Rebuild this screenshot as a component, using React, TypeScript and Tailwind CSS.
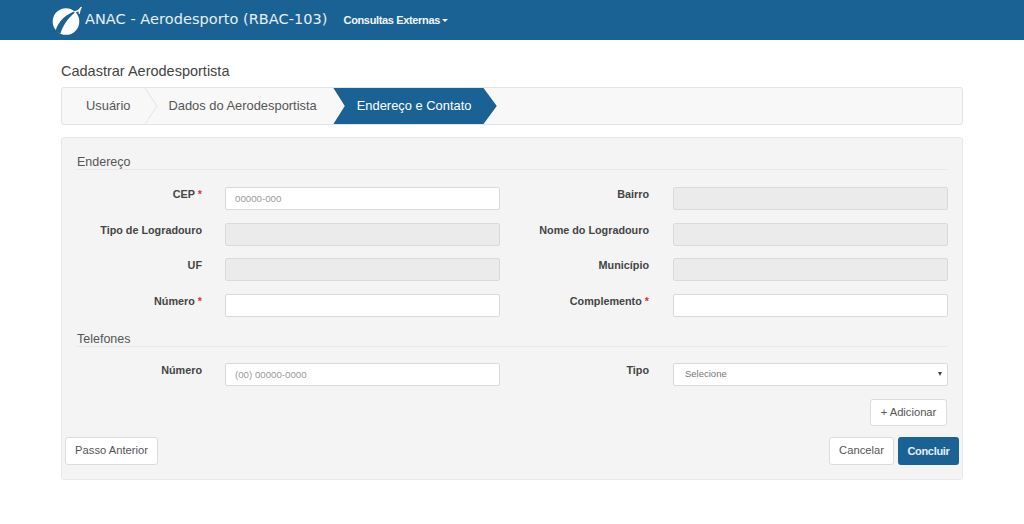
const sans = "font-['Liberation_Sans',Arial,sans-serif]";

function Logo() {
  return (
    <svg width="32" height="30" viewBox="0 0 32 30" className="shrink-0">
      <circle cx="14" cy="16.500" r="13.300" fill="#fff" />
      <path d="M3.500 26C6 16.500 14 8.500 25.500 5.500 18 11 11.500 18.500 8.500 28.500c-2-.5-3.700-1.300-5-2.500z" fill="#1b6294" />
      <path d="M20.500 7l5.500-2 2.700-3c.5-.5 1.300-.3 1.100.5L28.500 5.500l-.8 3.500-.9-.1-.3-2.700-2.900 1.300-.1 1-.9-.2-.2-1.200z" fill="#fff" />
    </svg>
  );
}

function Label({ text, req, right }: { text: string; req?: boolean; right?: boolean }) {
  return (
    <div className={`flex justify-end text-[10.800px] leading-[14px] font-bold text-[#444] ${right ? "pr-px" : ""}`}>
      <span>
        {text}
        {req && <span className="text-[#d9363e]"> *</span>}
      </span>
    </div>
  );
}

function Field({ ph, disabled }: { ph?: string; disabled?: boolean }) {
  return (
    <div
      className={`h-[23px] w-[275px] rounded-[2px] border border-[#dadada] px-[9px] text-[9.700px] leading-[21px] text-[#9a9a9a] ${
        disabled ? "bg-[#ebebeb]" : "bg-white"
      }`}
    >
      {ph}
    </div>
  );
}

function Row({ la, fa, lb, fb }: { la: React.ReactNode; fa: React.ReactNode; lb: React.ReactNode; fb: React.ReactNode }) {
  return (
    <div className="grid grid-cols-[125px_275px_127px_275px] items-start gap-x-[23px]">
      {la}
      {fa}
      {lb}
      {fb}
    </div>
  );
}

function Button({ children, className = "" }: { children: React.ReactNode; className?: string }) {
  return (
    <div className={`flex items-center justify-center rounded-[3px] border border-[#dcdcdc] bg-white text-[11.200px] text-[#555] ${className}`}>
      {children}
    </div>
  );
}

function Section({ title }: { title: string }) {
  return <div className="border-b border-[#e9e9e9] text-[12.500px] leading-[14px] text-[#555]">{title}</div>;
}

export default function App() {
  return (
    <div className={`h-[524px] w-[1024px] overflow-hidden bg-white ${sans}`}>
      <header className="flex h-10 items-center bg-[#1b6294] pl-[52px] text-white">
        <Logo />
        <span className="ml-[1px] font-['DejaVu_Sans',sans-serif] text-[14.500px] font-normal tracking-[0.05px] text-[#e6eff5]">
          ANAC - Aerodesporto (RBAC-103)
        </span>
        <span className="ml-[16px] flex items-center text-[11px] font-bold tracking-[-0.35px] text-[#f2f6f9]">
          Consultas Externas
          <span className="ml-[2px] mt-px h-0 w-0 border-x-[3px] border-t-[3px] border-x-transparent border-t-white" />
        </span>
      </header>

      <main className="mx-[61px] w-[902px]">
        <h1 className="mt-[23px] text-[14.500px] leading-[16px] font-normal text-[#444]">Cadastrar Aerodesportista</h1>

        <nav className="mt-[8px] flex h-[38px] items-center overflow-hidden rounded-[3px] border border-[#e3e3e3] bg-[#f8f8f8] text-[12.900px] text-[#555]">
          <span className="ml-[24px]">Usuário</span>
          <svg width="14" height="36" viewBox="0 0 14 36" className="ml-[15px] shrink-0">
            <path d="M0 0l12 18L0 36" fill="none" stroke="#e3e3e3" />
          </svg>
          <span className="ml-[9px]">Dados do Aerodesportista</span>
          <div className="ml-[16px] flex h-[38px] w-[164px] items-center bg-[#1b6294] pl-[24px] text-white [clip-path:polygon(0_0,150px_0,100%_50%,150px_100%,0_100%,12px_50%)]">
            Endereço e Contato
          </div>
        </nav>

        <section className="mt-[12px] h-[343px] rounded-[3px] border border-[#e8e8e8] bg-[#f4f4f4] pt-[17px]">
          <div className="mx-[15px]">
            <Section title="Endereço" />
            <div className="mt-[17px] flex flex-col gap-[12.600px]">
              <Row la={<Label text="CEP" req />} fa={<Field ph="00000-000" />} lb={<Label text="Bairro" right />} fb={<Field disabled />} />
              <Row la={<Label text="Tipo de Logradouro" />} fa={<Field disabled />} lb={<Label text="Nome do Logradouro" right />} fb={<Field disabled />} />
              <Row la={<Label text="UF" />} fa={<Field disabled />} lb={<Label text="Município" right />} fb={<Field disabled />} />
              <Row la={<Label text="Número" req />} fa={<Field />} lb={<Label text="Complemento" req right />} fb={<Field />} />
            </div>

            <div className="mt-[15px]">
              <Section title="Telefones" />
            </div>
            <div className="mt-[16px]">
              <Row
                la={<Label text="Número" />}
                fa={<Field ph="(00) 00000-0000" />}
                lb={<Label text="Tipo" right />}
                fb={
                  <div className="flex h-[23px] w-[275px] items-center justify-between rounded-[2px] border border-[#dadada] bg-white pl-[11px] pr-[5px] text-[9.500px] text-[#777]">
                    <span>Selecione</span>
                    <span className="h-0 w-0 border-x-[2.500px] border-t-[4px] border-x-transparent border-t-[#444]" />
                  </div>
                }
              />
            </div>
            <div className="mt-[13px] flex justify-end">
              <Button className="h-[27px] w-[77px]">+ Adicionar</Button>
            </div>
          </div>

          <div className="mx-[3px] mt-[11px] flex items-center gap-[4px]">
            <Button className="mr-auto h-[28px] w-[93px]">Passo Anterior</Button>
            <Button className="h-[28px] w-[65px]">Cancelar</Button>
            <div className="flex h-[28px] w-[61px] items-center justify-center rounded-[3px] bg-[#1b6294] text-[11px] font-bold tracking-[-0.3px] text-[#e6eff5]">
              Concluir
            </div>
          </div>
        </section>
      </main>
    </div>
  );
}
